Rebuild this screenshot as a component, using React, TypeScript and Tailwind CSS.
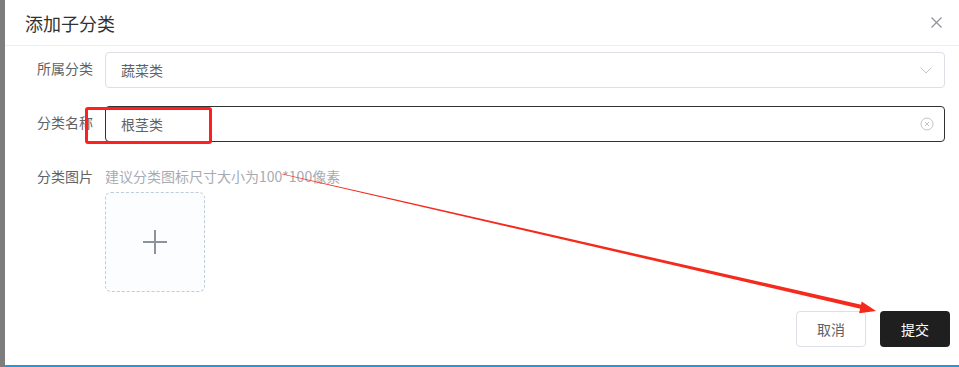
import React from 'react'

const FONT = "font-['Noto_Sans_CJK_SC','Noto_Sans',sans-serif]"

function FormRow({ label, children, className = '' }: { label: string; children: React.ReactNode; className?: string }) {
  return (
    <div className={`flex ${className}`}>
      <div className="w-[80px] shrink-0 pr-3 text-right text-[14px] leading-[32px] text-[#606266]">{label}</div>
      <div className="flex-1 min-w-0">{children}</div>
    </div>
  )
}

export default function App() {
  return (
    <div className={`relative flex h-[367px] w-[959px] overflow-hidden bg-white ${FONT}`}>
      {/* 左侧遮罩边 */}
      <div className="w-[5px] shrink-0 bg-[#7d7d7d]" />

      <div className="flex flex-1 flex-col">
        {/* 标题栏 */}
        <div className="flex h-[46px] shrink-0 items-center justify-between border-b border-[#ebeef5] pl-5 pr-[17px]">
          <span className="text-[18px] leading-6 text-[#303133]">添加子分类</span>
          <svg width="11" height="11" viewBox="0 0 11 11" className="text-[#909399]">
            <path d="M0.5 0.5L10.5 10.5M10.5 0.5L0.5 10.5" stroke="currentColor" strokeWidth="1.2" />
          </svg>
        </div>

        {/* 表单 */}
        <div className="pl-5 pr-[14px] pt-[6px]">
          <FormRow label="所属分类">
            <div className="flex h-9 items-center justify-between rounded-[4px] border border-[#dcdfe6] pl-[15px] pr-[12px]">
              <span className="text-[14px] text-[#606266]">蔬菜类</span>
              <svg width="12" height="7" viewBox="0 0 12 7" className="text-[#c0c4cc]">
                <path d="M0.5 0.5L6 6L11.5 0.5" fill="none" stroke="currentColor" strokeWidth="1" />
              </svg>
            </div>
          </FormRow>

          <FormRow label="分类名称" className="mt-[18px]">
            <div className="flex h-9 items-center justify-between rounded-[4px] border border-[#303133] pl-[15px] pr-[10px]">
              <span className="text-[14px] text-[#606266]">根茎类</span>
              <svg width="14" height="14" viewBox="0 0 14 14" className="text-[#c0c4cc]">
                <circle cx="7" cy="7" r="6" fill="none" stroke="currentColor" strokeWidth="1" />
                <path d="M5 5L9 9M9 5L5 9" stroke="currentColor" strokeWidth="1" />
              </svg>
            </div>
          </FormRow>

          <FormRow label="分类图片" className="mt-[18px]">
            <div className="text-[14px] leading-[32px] text-[#a8abb2]">建议分类图标尺寸大小为100*100像素</div>
            <div className="flex h-[100px] w-[100px] items-center justify-center rounded-[6px] border border-dashed border-[#c0ccda] bg-[#fbfdff]">
              <svg width="24" height="24" viewBox="0 0 24 24" className="text-[#8c939d]">
                <path d="M12 0V24M0 12H24" stroke="currentColor" strokeWidth="2" />
              </svg>
            </div>
          </FormRow>
        </div>

        {/* 底部按钮 */}
        <div className="mt-[19px] flex justify-end gap-[14px] pr-[9px]">
          <button className="h-9 w-[70px] rounded-[4px] border border-[#dcdfe6] bg-white text-[14px] text-[#606266]">取消</button>
          <button className="h-9 w-[70px] rounded-[4px] bg-[#1f1f1f] text-[14px] text-white">提交</button>
        </div>

        <div className="mt-auto h-[2px] bg-[#1e9be0]" />
      </div>

      {/* 标注：红框 */}
      <div className="pointer-events-none absolute left-[85px] top-[107px] h-[37px] w-[127px] rounded-[3px] border-[3px] border-[#ff1f1f]" />

      {/* 标注：红色箭头 */}
      <svg className="pointer-events-none absolute inset-0" width="959" height="367" viewBox="0 0 959 367">
        <polygon points="281.9,174.3 282.1,173.7 862.4,305.1 861.6,308.9" fill="#f5291c" />
        <polygon points="876,311 861.7,301.5 859.1,313.3" fill="#f5291c" />
      </svg>
    </div>
  )
}
